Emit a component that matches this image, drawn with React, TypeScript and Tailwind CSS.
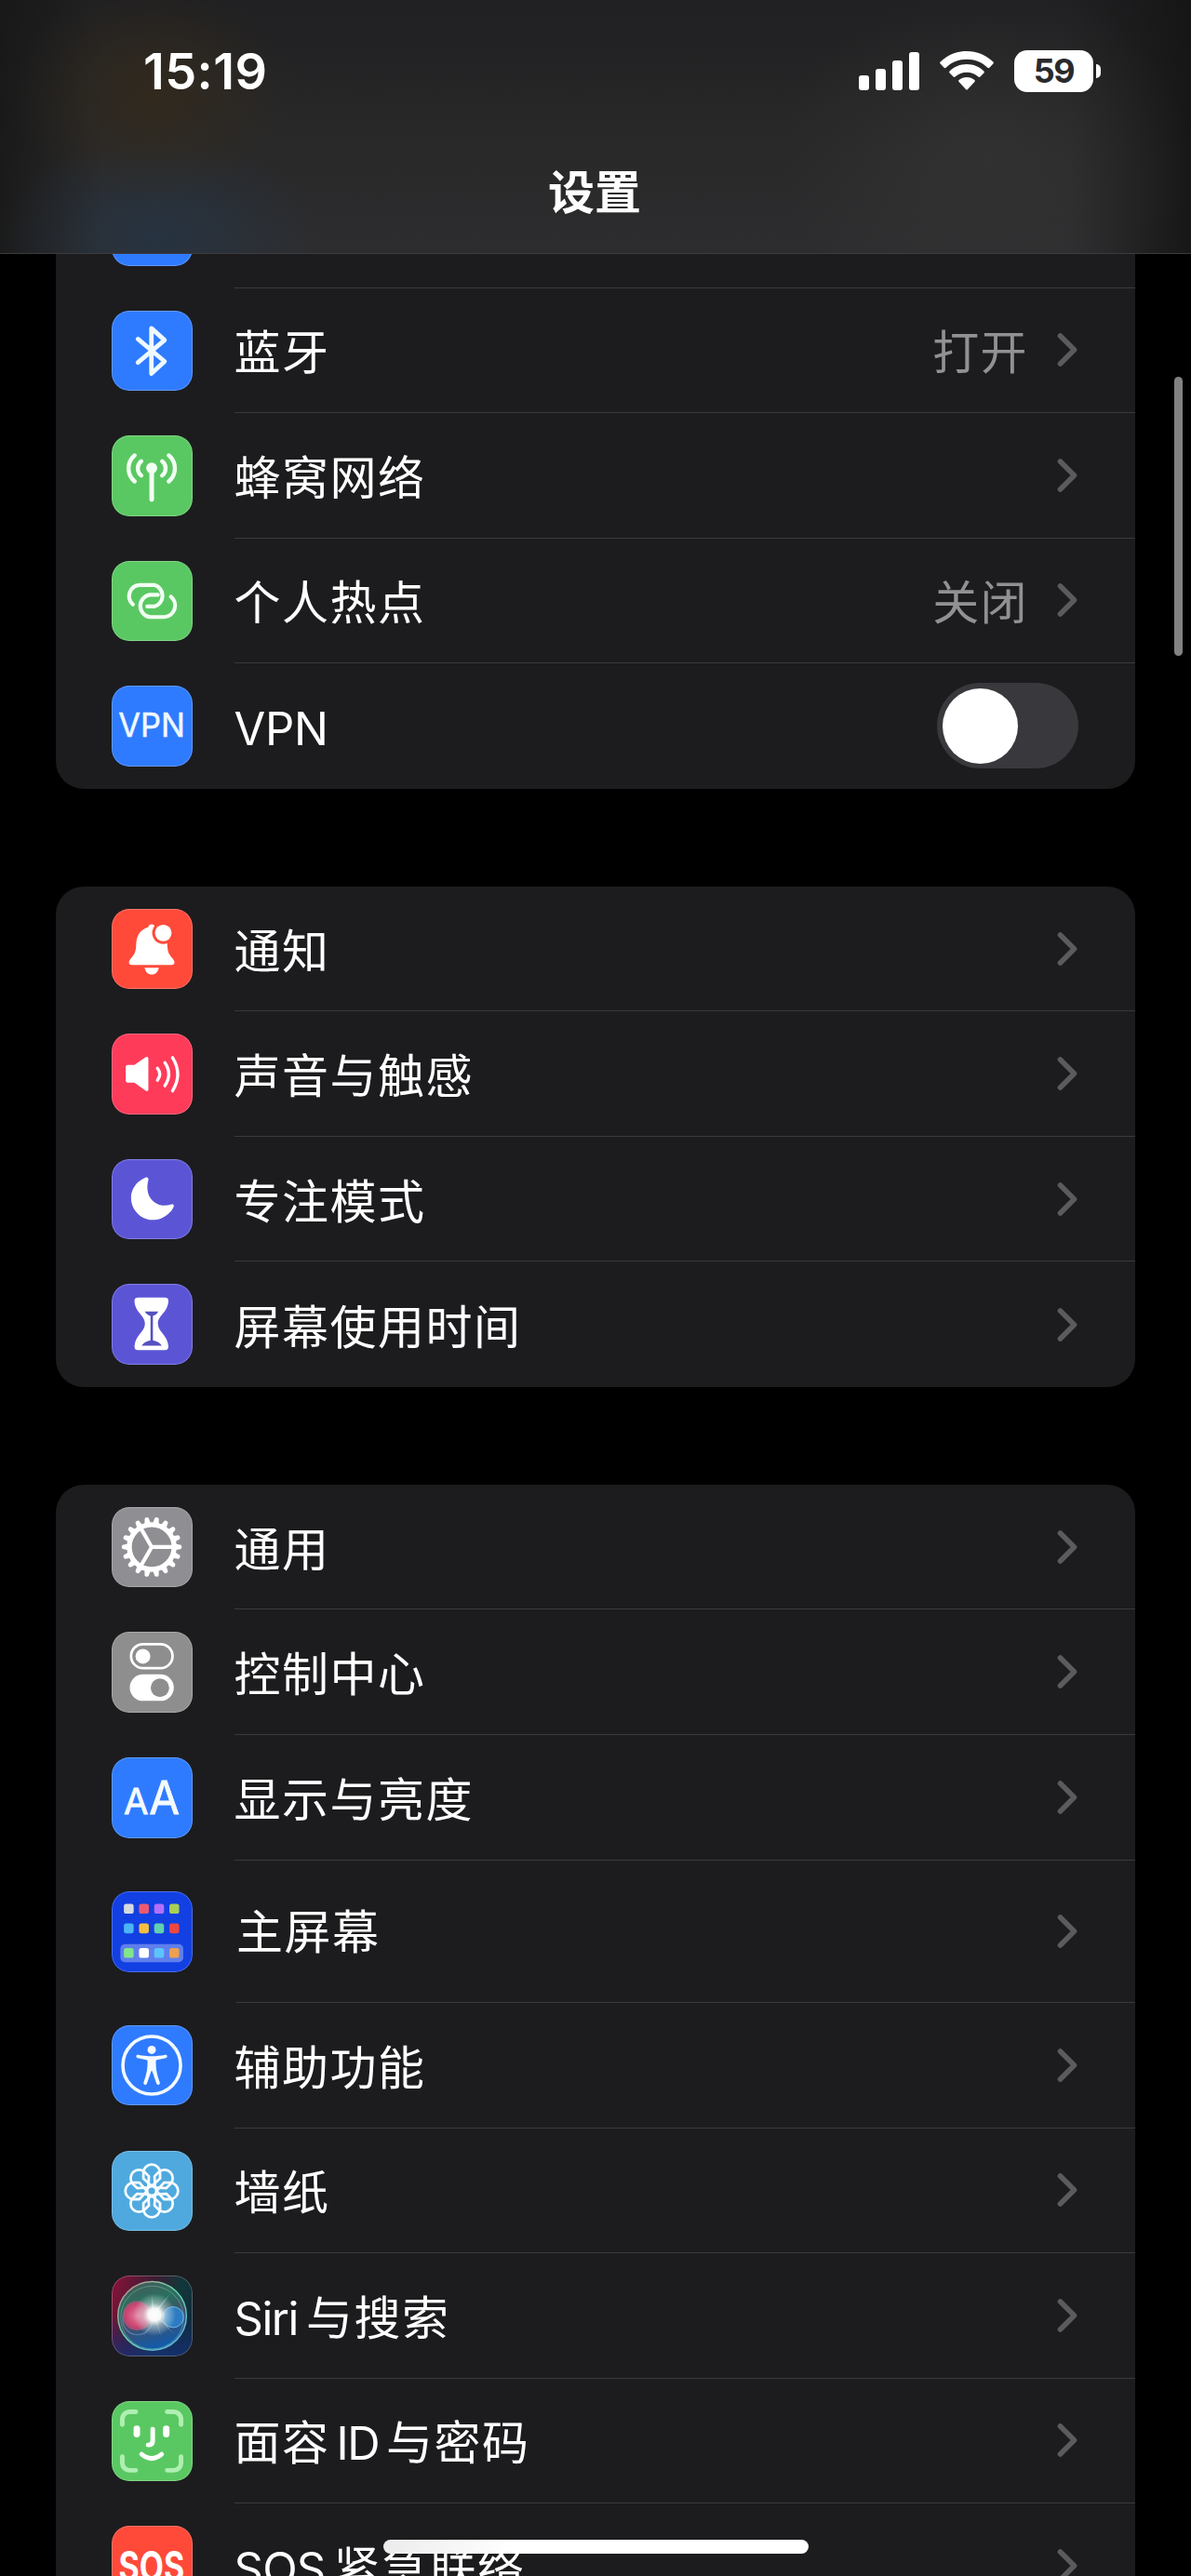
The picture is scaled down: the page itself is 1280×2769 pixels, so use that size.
import React from 'react';

const TEETH = Array.from({ length: 18 }, (_, i) => i * 20);
const PETALS = Array.from({ length: 8 }, (_, i) => i * 45);

const BluetoothGlyph = () => (
  <path d="M28.4 30.6 L57.2 54.8 L43 68 V19 L57.2 31.8 L28.4 56" fill="none" stroke="#effaff" strokeWidth="4.8" strokeLinecap="round" strokeLinejoin="round" />
);

const CellularGlyph = () => (
  <g fill="none" stroke="#f2fff3" strokeWidth="4.4" strokeLinecap="round">
    <circle cx="43.3" cy="35.3" r="6" fill="#f2fff3" stroke="none" />
    <path d="M43.3 38 V69.5" strokeWidth="5" />
    <path d="M32 28 A9.8 9.8 0 0 0 32 43.4" />
    <path d="M24.8 21.6 A18.5 18.5 0 0 0 24.8 49.8" />
    <path d="M54.6 28 A9.8 9.8 0 0 1 54.6 43.4" />
    <path d="M61.8 21.6 A18.5 18.5 0 0 1 61.8 49.8" />
  </g>
);

const HotspotGlyph = () => (
  <g fill="none" stroke="#f2fff3" strokeWidth="4.2" strokeLinecap="round">
    <path d="M23 47 A12 12 0 0 1 30.4 26 H46 A12 12 0 0 1 46 49.2 H38.5" />
    <path d="M64 38.6 A12.4 12.4 0 0 1 57 60.6 H41.5 A12.1 12.1 0 0 1 41.5 36.6 H50" />
  </g>
);

const VpnGlyph = () => (
  <text x="7.4" y="55.3" fontFamily="Inter, sans-serif" fontSize="36" fill="#effaff" stroke="#effaff" strokeWidth="0.5" textLength="72" lengthAdjust="spacingAndGlyphs">VPN</text>
);

const BellGlyph = () => (
  <g fill="#fff">
    <path d="M43.3 16.5 C41 16.5 40 18 39.4 19.8 C31.5 22.2 27 28 26.6 37 C26.2 46 25.4 48.6 20.4 54 C17.6 57.2 18.4 60.6 22 60.6 H64.6 C68.2 60.6 69 57.2 66.2 54 C61.2 48.6 60.4 46 60 37 C59.6 28 55.1 22.2 47.2 19.8 C46.6 18 45.6 16.5 43.3 16.5Z" />
    <path d="M35.6 63.6 H51 C50.2 68 47.4 71 43.3 71 C39.2 71 36.4 68 35.6 63.6Z" />
    <circle cx="55.8" cy="26" r="12" fill="#ff4a3a" />
    <circle cx="55.8" cy="26" r="9" />
  </g>
);

const SpeakerGlyph = () => (
  <g fill="none" stroke="#fff" strokeWidth="3.4" strokeLinecap="round">
    <path d="M17.5 34 H24.5 L36.5 25.6 C38.5 24.4 39.7 25.2 39.7 27.2 V60 C39.7 62 38.5 62.8 36.5 61.6 L24.5 53 H17.5 C16 53 15.2 52.2 15.2 50.6 V36.4 C15.2 34.8 16 34 17.5 34Z" fill="#fff" stroke="none" />
    <path d="M49.5 37.5 Q54.5 43.8 49.5 50.5" />
    <path d="M57.5 31.5 Q66 43.8 57.5 56.5" />
    <path d="M65.8 26 Q77 43.8 65.8 62" />
  </g>
);

const MoonGlyph = () => (
  <path d="M36.2 20 C24 25 18.2 38 22.2 49.5 C27 63 41 69 53.4 64 C60 61.2 65 56.6 67 51.6 C67.8 49.4 66.2 48.2 64 49 C53.4 52.6 42.2 47 39.4 36.6 C38.2 32 38.4 27 39.6 22.8 C40.2 20.2 38.6 19 36.2 20Z" fill="#fff" />
);

const HourglassGlyph = () => (
  <>
    <path d="M28.5 14.8 H57.5 C60.4 14.8 61.5 16.2 61.3 19 C60.6 31 50 34 50 43 C50 52 60.6 55.5 61.3 67.4 C61.5 70.2 60.4 71.6 57.5 71.6 H28.5 C25.6 71.6 24.5 70.2 24.7 67.4 C25.4 55.5 36 52 36 43 C36 34 25.4 31 24.7 19 C24.5 16.2 25.6 14.8 28.5 14.8Z" fill="#fff" />
    <path d="M35.8 29.8 H50.6 Q49 33 44.6 34.6 V61 Q52 62.4 54.2 67 H32.4 Q34.6 62.4 42 61 V34.6 Q37.4 33 35.8 29.8Z" fill="#5450c0" />
  </>
);

const GearGlyph = () => (
  <g fill="none" stroke="#fff" strokeWidth="4.2">
    <circle cx="43.3" cy="43.2" r="24.2" strokeWidth="5.4" />
    {TEETH.map((deg) => (
      <path key={deg} d="M67.5 39.6 L75 41.1 Q76.6 43.2 75 45.3 L67.5 46.8Z" fill="#fff" stroke="none" transform={`rotate(${deg} 43.3 43.2)`} />
    ))}
    <path d="M43.3 43.2 H67 M43.3 43.2 L31.5 22.8 M43.3 43.2 L31.5 63.6" />
  </g>
);

const ControlGlyph = () => (
  <>
    <rect x="21" y="13.4" width="44.8" height="26" rx="13" fill="none" stroke="#fff" strokeWidth="2.8" />
    <circle cx="33.8" cy="26.6" r="8" fill="#fff" />
    <rect x="19.6" y="46" width="47.6" height="28.8" rx="14.4" fill="#fff" />
    <circle cx="52.2" cy="60.6" r="10" fill="#8e8e8f" />
  </>
);

const TextSizeGlyph = () => (
  <g fontFamily="Inter, sans-serif" fill="#f4faff" stroke="#f4faff" strokeWidth="0.8">
    <text x="13.2" y="61.6" fontSize="39" textLength="26.6" lengthAdjust="spacingAndGlyphs">A</text>
    <text x="40.6" y="61.6" fontSize="50" textLength="33" lengthAdjust="spacingAndGlyphs">A</text>
  </g>
);

const HomeGlyph = () => {
  const rows = [
    { y: 13.6, fills: ['#d6dadf', '#f05a70', '#b070fb', '#a9cf55'] },
    { y: 34.8, fills: ['#4cb4f7', '#f5be42', '#62cfae', '#ee4740'] },
    { y: 61.4, fills: ['#80e78a', '#ffffff', '#5bc4fb', '#eda050'] },
  ];
  return (
    <>
      <rect x="9.4" y="57" width="68" height="19.6" rx="5" fill="#5f7fec" />
      {rows.map((row) =>
        row.fills.map((fill, i) => (
          <rect key={fill} x={13.2 + i * 16.4} y={row.y} width="10.6" height="10.6" rx="2.6" fill={fill} />
        ))
      )}
    </>
  );
};

const AccessibilityGlyph = () => (
  <g fill="#f4faff">
    <circle cx="43.3" cy="43.3" r="31.2" fill="none" stroke="#f4faff" strokeWidth="3.6" />
    <circle cx="43.3" cy="26.6" r="4.5" />
    <path d="M28.6 32 C38 34 48.6 34 58 32 C60.4 31.6 60.8 34.8 58.6 35.4 L49 37.4 C48 37.7 47.8 38.2 47.8 39.2 C47.8 48 49 53 52 61.6 C52.8 64.4 49.6 65.4 48.4 62.8 L44 50 C43.6 49 43 49 42.6 50 L38.2 62.8 C37 65.4 33.8 64.4 34.6 61.6 C37.6 53 38.8 48 38.8 39.2 C38.8 38.2 38.6 37.7 37.6 37.4 L28 35.4 C25.8 34.8 26.2 31.6 28.6 32Z" />
  </g>
);

const WallpaperGlyph = () => (
  <g fill="none" stroke="#f6fcff" strokeWidth="2.8" strokeLinejoin="round">
    {PETALS.map((deg) => (
      <path key={deg} d="M43.3 38 L34.3 30 V23.8 A9 9 0 0 1 52.3 23.8 V30 Z" transform={`rotate(${deg} 43.3 43.3)`} />
    ))}
    <circle cx="43.3" cy="43.3" r="5" />
  </g>
);

const SiriGlyph = () => (
  <>
    <defs>
      <linearGradient id="siriBg" x1="0" y1="0.1" x2="1" y2="0.5">
        <stop offset="0" stopColor="#8a1238" />
        <stop offset="0.45" stopColor="#3a1c33" />
        <stop offset="0.75" stopColor="#12383a" />
        <stop offset="1" stopColor="#102c3c" />
      </linearGradient>
      <linearGradient id="siriBase" x1="0" y1="0" x2="0" y2="1">
        <stop offset="0.5" stopColor="#15307c" stopOpacity="0" />
        <stop offset="1" stopColor="#16307f" stopOpacity="0.7" />
      </linearGradient>
      <linearGradient id="siriOrb" x1="0.1" y1="0" x2="0.4" y2="1">
        <stop offset="0" stopColor="#4a5658" />
        <stop offset="0.35" stopColor="#2a7060" />
        <stop offset="0.62" stopColor="#3f5068" />
        <stop offset="1" stopColor="#145aa8" />
      </linearGradient>
      <linearGradient id="siriRim" x1="0" y1="0" x2="1" y2="1">
        <stop offset="0" stopColor="#d77f90" />
        <stop offset="0.45" stopColor="#62d6a4" />
        <stop offset="1" stopColor="#66a8e8" />
      </linearGradient>
      <radialGradient id="siriPink" cx="0.5" cy="0.5" r="0.5">
        <stop offset="0" stopColor="#e27a9c" />
        <stop offset="0.75" stopColor="#cc4470" />
        <stop offset="1" stopColor="#b8507a" stopOpacity="0.7" />
      </radialGradient>
      <radialGradient id="siriGlow" cx="0.5" cy="0.5" r="0.5">
        <stop offset="0" stopColor="#fff" />
        <stop offset="0.3" stopColor="#fff" stopOpacity="0.95" />
        <stop offset="0.55" stopColor="#dff2ee" stopOpacity="0.5" />
        <stop offset="1" stopColor="#dff2ee" stopOpacity="0" />
      </radialGradient>
    </defs>
    <rect width="87" height="87" rx="19" fill="url(#siriBg)" />
    <rect width="87" height="87" rx="19" fill="url(#siriBase)" />
    <circle cx="43.8" cy="43.6" r="37" fill="url(#siriOrb)" stroke="url(#siriRim)" strokeWidth="1.5" />
    <circle cx="43.8" cy="45.4" r="34" fill="none" stroke="#8fd8bb" strokeOpacity="0.4" strokeWidth="1" />
    <circle cx="28" cy="48" r="16" fill="none" stroke="#7aa2d8" strokeOpacity="0.5" strokeWidth="1.4" />
    <circle cx="27.6" cy="43.5" r="16" fill="url(#siriPink)" />
    <circle cx="66.5" cy="45" r="11.2" fill="#2b83cf" fillOpacity="0.85" stroke="#6db4ea" strokeWidth="1" />
    <path d="M46 42 L34 68 L46 44 L54 68 L47 43 L67 63 L48 41 L63 20 L46 39 L44 22 L43 39 L29 27Z" fill="#e9fff8" fillOpacity="0.4" />
    <circle cx="46.4" cy="42.4" r="23" fill="url(#siriGlow)" />
  </>
);

const FaceIdGlyph = () => (
  <g fill="none" stroke="#fff" strokeWidth="5" strokeLinecap="round">
    <g stroke="#aeefb2">
      <path d="M11.5 25.5 V19 A8 8 0 0 1 19.5 11.5 H26" />
      <path d="M60 11.5 H67 A8 8 0 0 1 75 19 V25.5" />
      <path d="M75 60 V67 A8 8 0 0 1 67 74.8 H60" />
      <path d="M26 74.8 H19.5 A8 8 0 0 1 11.5 67 V60" />
    </g>
    <path d="M27.2 30 V35.6 M59 30 V35.6" strokeWidth="7" />
    <path d="M44.4 30.5 V43 Q44.4 47.4 39.4 47.4" />
    <path d="M32.4 57.5 Q43.3 66.5 54 57.5" />
  </g>
);

const SosGlyph = () => (
  <text x="7.6" y="60.4" fontFamily="Inter, sans-serif" fontWeight="700" fontSize="45" fill="#fff" textLength="71" lengthAdjust="spacingAndGlyphs">SOS</text>
);

type Item = {
  label: React.ReactNode;
  tile: string;
  glyph?: React.FC;
  value?: string;
  toggle?: boolean;
  tall?: boolean;
};

const connectivity: Item[] = [
  { label: '', tile: 'bg-[#2f7bff]' },
  { label: '蓝牙', tile: 'bg-[#2f7bff]', glyph: BluetoothGlyph, value: '打开' },
  { label: '蜂窝网络', tile: 'bg-[#5ac862]', glyph: CellularGlyph },
  { label: '个人热点', tile: 'bg-[#5ac862]', glyph: HotspotGlyph, value: '关闭' },
  { label: <span className="text-[49px] tracking-[-0.3px]">VPN</span>, tile: 'bg-[#2f7bff]', glyph: VpnGlyph, toggle: true },
];

const attention: Item[] = [
  { label: '通知', tile: 'bg-[#ff4a3a]', glyph: BellGlyph },
  { label: '声音与触感', tile: 'bg-[#ff3b5a]', glyph: SpeakerGlyph },
  { label: '专注模式', tile: 'bg-[#5b55d6]', glyph: MoonGlyph },
  { label: '屏幕使用时间', tile: 'bg-[#5b55d6]', glyph: HourglassGlyph },
];

const system: Item[] = [
  { label: '通用', tile: 'bg-[#8e8e93]', glyph: GearGlyph },
  { label: '控制中心', tile: 'bg-[#8e8e8f]', glyph: ControlGlyph },
  { label: '显示与亮度', tile: 'bg-[#2f7bff]', glyph: TextSizeGlyph },
  { label: '主屏幕', tile: 'bg-[#1240e2]', glyph: HomeGlyph, tall: true },
  { label: '辅助功能', tile: 'bg-[#2f7bff]', glyph: AccessibilityGlyph },
  { label: '墙纸', tile: 'bg-[#4fa9de]', glyph: WallpaperGlyph },
  { label: <><span className="mr-[9px] text-[49px] tracking-[-1.5px]">Siri</span>与搜索</>, tile: 'bg-[#1d2a3a]', glyph: SiriGlyph },
  { label: <>面容<span className="ml-[7px] mr-[8px] text-[49px] tracking-[-1.5px]">ID</span>与密码</>, tile: 'bg-[#5ac862]', glyph: FaceIdGlyph },
  { label: <><span className="mr-[9px] text-[49px] tracking-[-0.8px]">SOS</span>紧急联络</>, tile: 'bg-[#ff4a3a]', glyph: SosGlyph },
];

const Chevron = () => (
  <svg width="23" height="38" viewBox="0 0 23 38" className="shrink-0">
    <path d="M3.5 4 L18.5 19 L3.5 34" fill="none" stroke="#5b5b5e" strokeWidth="5.6" strokeLinecap="round" strokeLinejoin="round" />
  </svg>
);

const Toggle = () => (
  <div className="flex h-[92px] w-[152px] items-center rounded-full bg-[#39393d] pl-[6px]">
    <div className="size-[81px] rounded-full bg-white"></div>
  </div>
);

const Row: React.FC<{ item: Item; last: boolean }> = ({ item, last }) => {
  const Glyph = item.glyph;
  return (
    <div className={`flex shrink-0 items-center pl-[60px] ${item.tall ? 'h-[153.4px]' : 'h-[134.55px]'}`}>
      <div className={`relative size-[86.5px] shrink-0 overflow-hidden rounded-[19px] ${item.tile}`}>
        {Glyph && <svg width="86.5" height="86.5" viewBox="0 0 87 87"><Glyph /></svg>}
        <div className="absolute inset-0 rounded-[19px] border border-white/25"></div>
      </div>
      <div className={`flex h-full flex-1 items-center justify-between pr-[61px] ${item.tall ? 'ml-[47.5px]' : 'ml-[45px]'} ${last ? '' : 'border-b border-[#3a3a3c]'}`}>
        <span className={`text-[50px] leading-none tracking-[1.5px] text-white ${item.tall ? 'pt-[3px]' : 'pt-[6px]'}`}>{item.label}</span>
        <div className="flex items-center gap-[31px]">
          {item.value && <span className="pt-[6px] text-[50px] leading-none tracking-[1.4px] text-[#919194]">{item.value}</span>}
          {item.toggle ? <Toggle /> : <Chevron />}
        </div>
      </div>
    </div>
  );
};

const Group: React.FC<{ items: Item[]; className?: string }> = ({ items, className = '' }) => (
  <section className={`mx-[60px] flex shrink-0 flex-col overflow-hidden rounded-[30px] bg-[#1c1c1e] ${className}`}>
    {items.map((item, i) => (
      <Row key={i} item={item} last={i === items.length - 1} />
    ))}
  </section>
);

const StatusBar = () => (
  <div className="flex h-[152px] items-center justify-between pl-[154px] pr-[97px]">
    <span className="pt-[2px] font-[Inter] text-[54px] font-semibold leading-none tracking-[0.4px] text-white">15:19</span>
    <div className="flex items-center">
      <svg width="66" height="42" viewBox="0 0 66 42" fill="#fff">
        <rect x="0" y="26" width="11" height="16" rx="3" />
        <rect x="18" y="19" width="11" height="23" rx="3" />
        <rect x="36" y="10" width="11" height="32" rx="3" />
        <rect x="54" y="1" width="11" height="41" rx="3" />
      </svg>
      <svg width="58" height="42" viewBox="0 0 58 42" fill="#fff" className="ml-[21px]">
        <path d="M29 0 C18 0 8 4.200 .6 11.600 C0 12.200 0 13 .6 13.600 L4.600 17.700 C5.200 18.300 6 18.300 6.600 17.700 C12.600 12 20.500 8.800 29 8.800 C37.500 8.800 45.400 12 51.400 17.700 C52 18.300 52.800 18.300 53.400 17.700 L57.400 13.600 C58 13 58 12.200 57.400 11.600 C50 4.200 40 0 29 0Z" />
        <path d="M29 14 C21.900 14 15.400 16.700 10.600 21.400 C10 22 10 22.800 10.600 23.400 L14.600 27.500 C15.200 28.100 16 28.100 16.600 27.500 C20 24.500 24.300 22.800 29 22.800 C33.700 22.800 38 24.500 41.400 27.500 C42 28.100 42.800 28.100 43.400 27.500 L47.400 23.400 C48 22.800 48 22 47.400 21.400 C42.600 16.700 36.100 14 29 14Z" />
        <path d="M29 28 C25.800 28 22.900 29.200 20.600 31.100 C20 31.700 20 32.400 20.600 33 L28 41 C28.600 41.700 29.400 41.700 30 41 L37.400 33 C38 32.400 38 31.700 37.400 31.100 C35.100 29.200 32.200 28 29 28Z" />
      </svg>
      <div className="ml-[22px] flex h-[45px] w-[85px] items-center justify-center rounded-[14px] bg-white">
        <span className="font-[Inter] text-[36px] font-bold leading-none tracking-[-1.4px] text-[#2a2a2c]">59</span>
      </div>
      <div className="ml-[3px] h-[15px] w-[5px] rounded-r-full bg-white"></div>
    </div>
  </div>
);

export default function App() {
  return (
    <div className="relative flex h-[2769px] w-[1280px] flex-col overflow-hidden bg-black font-[Inter,'Noto_Sans_CJK_SC',sans-serif]">
      <header className="h-[273px] shrink-0 border-b border-[#3c3c3e] bg-[radial-gradient(ellipse_150px_120px_at_165px_100px,#3a2c1899,transparent),radial-gradient(ellipse_170px_110px_at_170px_255px,#24384e99,transparent),radial-gradient(ellipse_220px_190px_at_1060px_170px,#3a3a3a77,transparent),linear-gradient(to_right,#161616cc,transparent_110px,transparent_1150px,#141415dd),linear-gradient(#202022,#29292a_60%,#2d2d2f)]">
        <StatusBar />
        <h1 className="mt-[30px] pr-[2px] text-center text-[50px] font-semibold leading-none text-white">设置</h1>
      </header>

      <main className="flex min-h-0 flex-1 flex-col overflow-hidden">
        {/* First group is scrolled partly beneath the title bar */}
        <Group items={connectivity} className="-mt-[98px]" />
        <Group items={attention} className="mt-[105px]" />
        <Group items={system} className="mt-[105px]" />
      </main>

      {/* Scroll indicator */}
      <div className="absolute right-[9px] top-[405px] h-[300px] w-[9px] rounded-full bg-[#828282]"></div>
      {/* Home indicator */}
      <div className="absolute left-[412px] top-[2730px] h-[15px] w-[457px] rounded-full bg-linear-to-r from-[#ececec] to-white to-30%"></div>
    </div>
  );
}
